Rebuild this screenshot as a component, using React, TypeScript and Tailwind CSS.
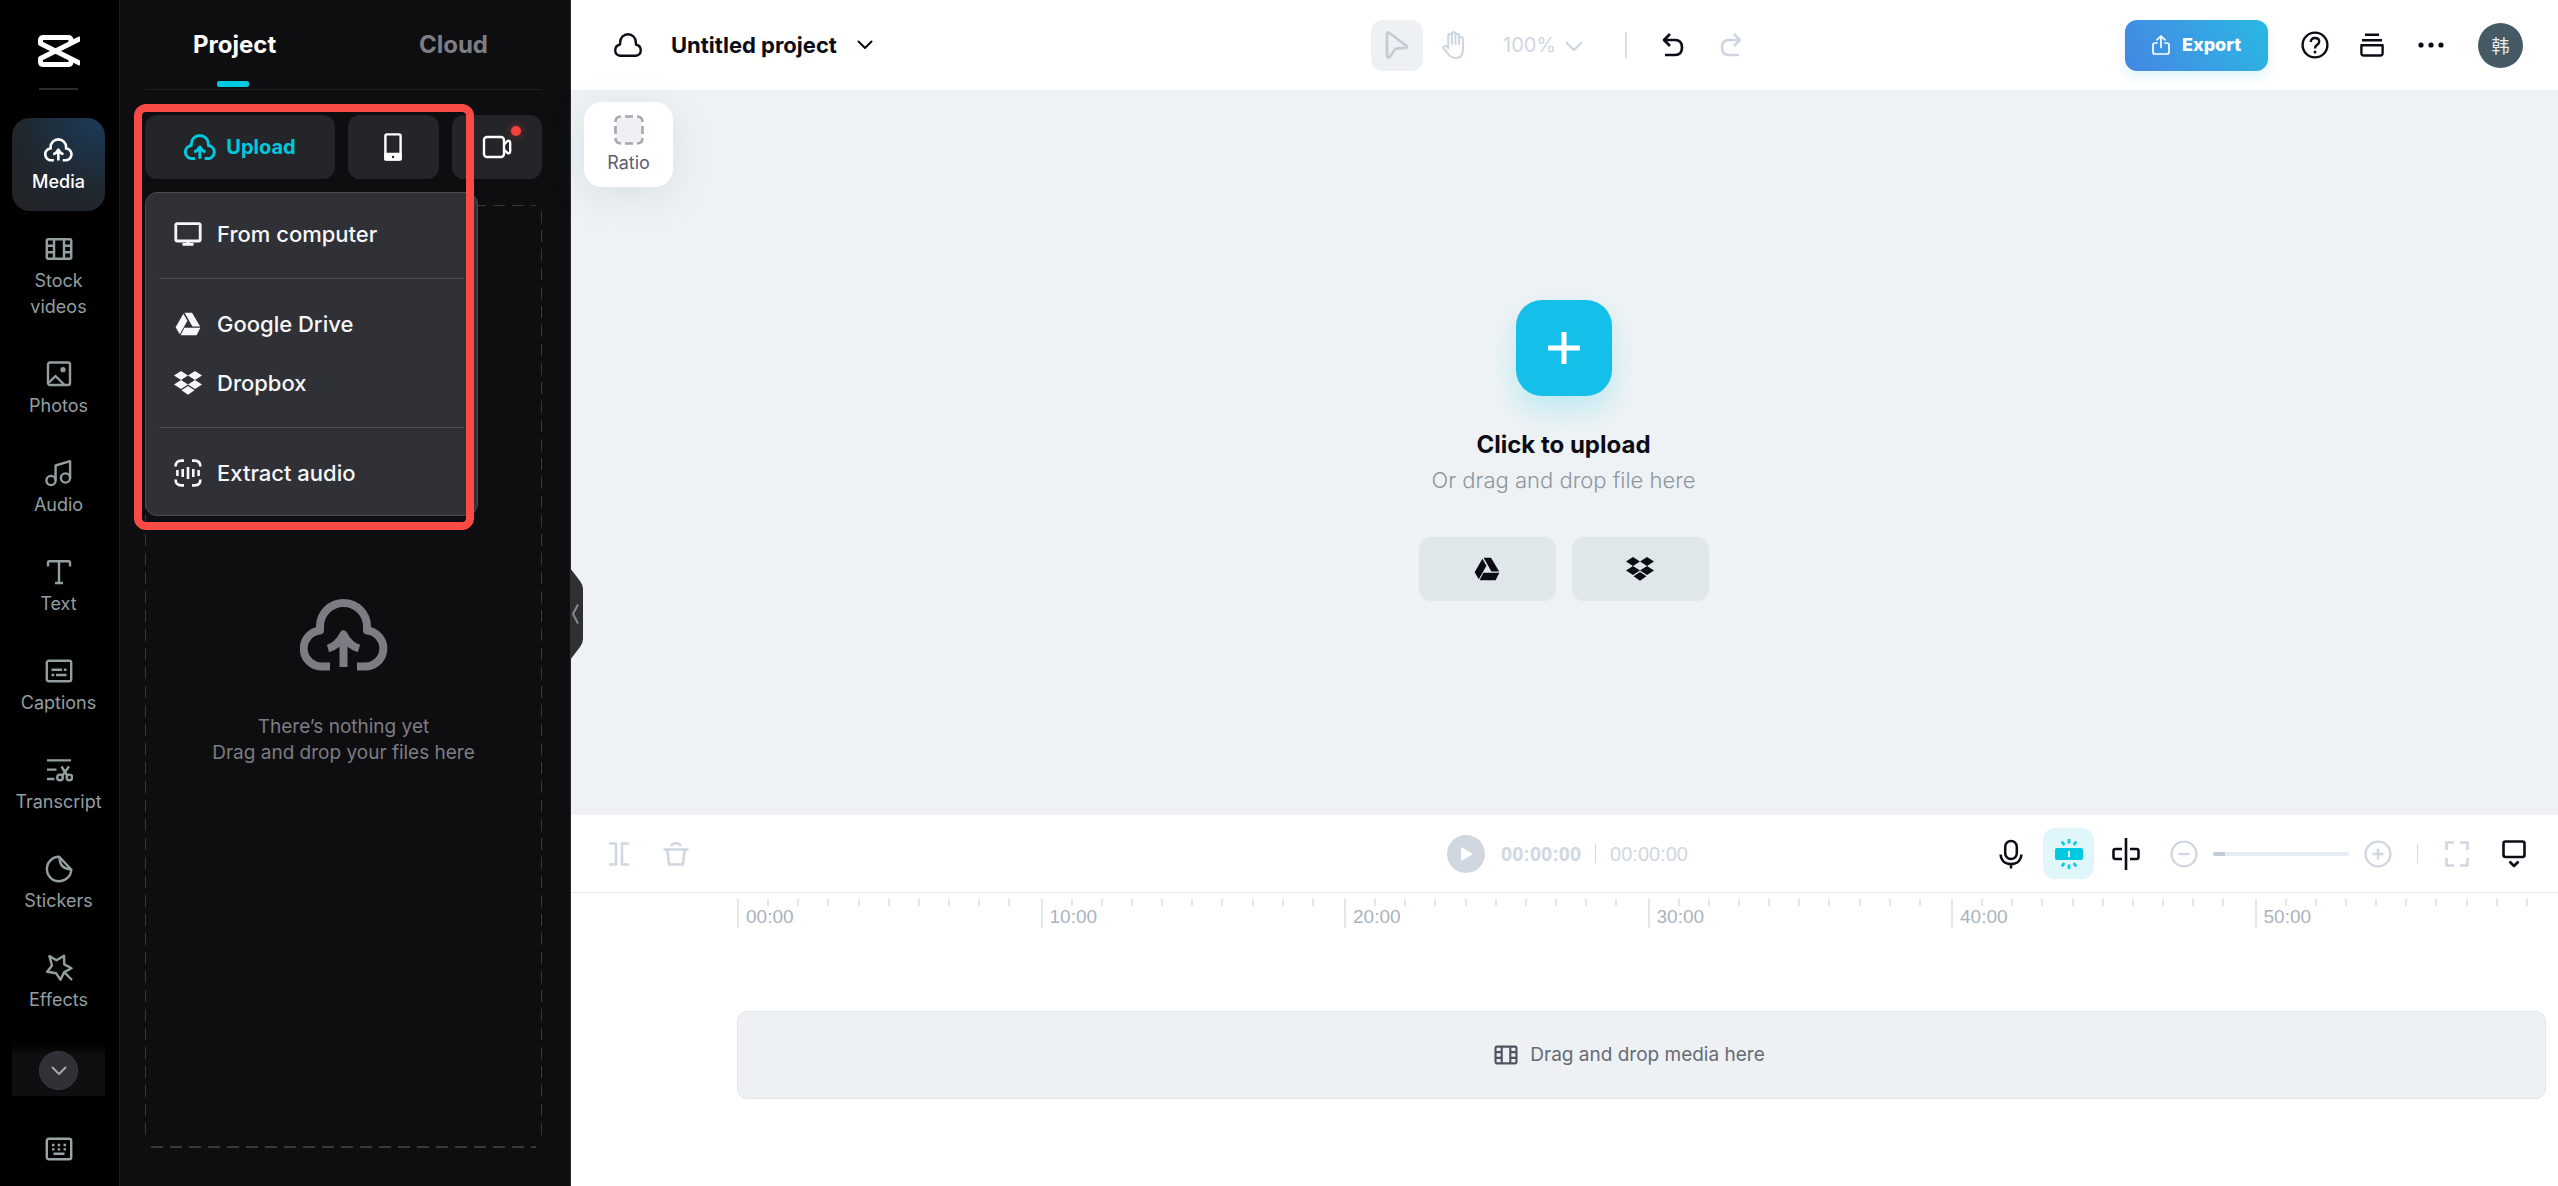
import type { ReactNode } from "react";

const stroke = { fill: "none", stroke: "currentColor", strokeLinecap: "round", strokeLinejoin: "round" } as const;
const flat = { fill: "none", stroke: "currentColor", strokeLinejoin: "round" } as const;

function CloudUploadIcon({ className }: { className: string }) {
  return (
    <svg viewBox="0 0 88 72" className={className} {...flat} strokeWidth="8">
      <path d="M30 67.5H23.5A18 18 0 0 1 20 31.5V27.5a23.5 23.5 0 0 1 47 0v4A18 18 0 0 1 63.5 67.5H57" />
      <path d="M28 49.5C35 47.5 40 42.5 43.5 35.5C47 42.5 52 47.5 59 49.5M43.5 40V68" />
    </svg>
  );
}

function DriveIcon({ className }: { className: string }) {
  return (
    <svg viewBox="0 0 26 24" className={className} fill="currentColor">
      <path d="M8.4 1.8 12.4 8.8 4.8 22.2.6 15.2zM9.6.8H17L25.2 14.6H17.4zM9.4 15.8H25.4L21.6 23.2H5.6z" />
    </svg>
  );
}

function DropboxIcon({ className }: { className: string }) {
  return (
    <svg viewBox="0 0 28 24" className={className} fill="currentColor">
      <path d="M7 0 14 4.5 7 9 0 4.5zM21 0 28 4.5 21 9 14 4.5zM7 9 14 13.5 7 18 0 13.5zM21 9 28 13.5 21 18 14 13.5zM14 15 20.5 19.3 14 23.8 7.5 19.3z" />
    </svg>
  );
}

function FilmIcon({ className }: { className: string }) {
  return (
    <svg viewBox="0 0 28 28" className={className} {...flat} strokeWidth="2.5">
      <rect x="1.8" y="4.2" width="24.4" height="19.6" rx="1.5" />
      <path d="M9 4v20M19 4v20M2 10.7h7M2 17.3h7M19 10.7h7M19 17.3h7" />
    </svg>
  );
}

function ChevronDown({ className }: { className: string }) {
  return (
    <svg viewBox="0 0 16 10" className={className} {...stroke} strokeWidth="2">
      <path d="M1.5 1.5 8 8l6.5-6.5" />
    </svg>
  );
}

function NavIcon({ children }: { children: ReactNode }) {
  return (
    <svg viewBox="0 0 28 28" className="size-7" {...flat} strokeWidth="2.4">
      {children}
    </svg>
  );
}

const navItems = [
  { label: "Stock videos", icon: <FilmIcon className="size-7" /> },
  {
    label: "Photos",
    icon: (
      <NavIcon>
        <rect x="3" y="2.5" width="22" height="22.5" rx="2" />
        <circle cx="18" cy="9.7" r="2.6" fill="currentColor" stroke="none" />
        <path d="M4 22.5 10.5 16l9 9" />
      </NavIcon>
    ),
  },
  {
    label: "Audio",
    icon: (
      <NavIcon>
        <circle cx="6" cy="21.5" r="4.6" />
        <circle cx="20.5" cy="19" r="4.6" />
        <path d="M10.6 21.5V6.5L25.1 2.2V19" />
      </NavIcon>
    ),
  },
  {
    label: "Text",
    icon: (
      <NavIcon>
        <path d="M3 8.5V4.7Q3 3.2 4.5 3.2H23.5Q25 3.2 25 4.7V8.5M14 3.2V25M10 25h8" />
      </NavIcon>
    ),
  },
  {
    label: "Captions",
    icon: (
      <NavIcon>
        <rect x="1.8" y="3.8" width="24.4" height="20.4" rx="2" />
        <path d="M6.5 12.7h10.5M18.8 12.7h2.7M6.5 18h2.7M11 18h10.5" />
      </NavIcon>
    ),
  },
  {
    label: "Transcript",
    icon: (
      <NavIcon>
        <path d="M2 4.4h24M2 13.6h9.5M2 23h7.5M16.5 10.5l6 9.5M24 10.5l-7 9.5" />
        <circle cx="15" cy="21.4" r="2.8" />
        <circle cx="24.4" cy="21.4" r="2.8" />
      </NavIcon>
    ),
  },
  {
    label: "Stickers",
    icon: (
      <NavIcon>
        <path d="M14 1.7A12.2 12.3 0 1 0 26.3 14.5L14 1.7zM14.5 2.5C14.5 10 18 14 26 14.5" />
      </NavIcon>
    ),
  },
  {
    label: "Effects",
    icon: (
      <NavIcon>
        <path d="M4.4 2.1 11.5 6.3 19 1.7 19.3 10.4 26.5 14.3 19.2 18.1 15.5 25.8 11.1 19.2 2.2 17.8 7 11.5zM19.2 18.1 27 26" />
      </NavIcon>
    ),
  },
];

function Sidebar() {
  return (
    <nav className="flex w-[120px] flex-none flex-col items-center border-r border-[#1c1c1e] bg-black pt-[35px] pr-0.5 pb-[23px]">
      <svg viewBox="0 0 42 32" className="h-8 w-[42px] text-white" {...flat} strokeWidth="5">
        <path d="M42.5 3.5 2.5 23.5V26.5Q2.5 29.5 5.5 29.5H30Q33 29.5 33 26.5V25" />
        <path d="M42.5 28.5 2.5 8.5V5.5Q2.5 2.5 5.5 2.5H30Q33 2.5 33 5.5V7" />
      </svg>
      <div className="mt-[21px] h-0.5 w-[39px] bg-[#2c2c2e]" />

      <div className="mt-7 flex w-[93px] flex-col gap-1.5 text-center text-lg/[26px] text-[#939ea1]">
        <button className="flex flex-col items-center rounded-[18px] bg-[radial-gradient(circle_at_90%_0%,#1b3a57,#20272e_60%,#222326)] pt-[18px] pb-4 font-medium text-white">
          <span className="flex size-7 items-center justify-center">
            <CloudUploadIcon className="w-[29px] flex-none" />
          </span>
          <span className="mt-[5px]">Media</span>
        </button>
        {navItems.map((item) => (
          <button key={item.label} className="flex flex-col items-center pt-[18px] pb-4">
            {item.icon}
            <span className="mt-[5px]">{item.label}</span>
          </button>
        ))}
      </div>

      <div className="flex h-[67px] w-[93px] flex-none items-end justify-center bg-linear-to-b from-black to-[#0f0f11] to-40% pb-1.5">
        <button
          aria-label="More tools"
          className="flex size-[39px] items-center justify-center rounded-full border border-[#3b3c41] bg-[#303136] text-[#a6a7ad]"
        >
          <ChevronDown className="w-4" />
        </button>
      </div>

      <button aria-label="Keyboard shortcuts" className="mt-auto text-[#9aa5a8]">
        <NavIcon>
          <rect x="1.8" y="3.8" width="24.4" height="20.4" rx="2" />
          <path d="M7 10h2.5M12.7 10h2.5M18.5 10h2.5M7 14.4h2.5M12.7 14.4h2.5M18.5 14.4h2.5M8.5 18.8h11" />
        </NavIcon>
      </button>
    </nav>
  );
}

function MenuItem({ icon, children }: { icon: ReactNode; children: ReactNode }) {
  return (
    <button role="menuitem" className="flex h-[59px] w-full items-center gap-[15px] pl-7 text-left">
      <span className="flex w-7 justify-center">{icon}</span>
      {children}
    </button>
  );
}

function UploadMenu() {
  return (
    <div
      role="menu"
      className="absolute top-[77px] left-0 z-10 w-[333px] rounded-xl border border-[#4a4b50] bg-[#303136] pt-[11px] pb-[13px] text-[22px]/7 font-medium text-[#f7f7fa]"
    >
      <MenuItem
        icon={
          <svg viewBox="0 0 28 24" className="w-7" {...flat} strokeWidth="2.8">
            <rect x="1.8" y="1.6" width="24.4" height="17.4" rx="1.5" />
            <path d="M14 19v3M8.5 22.4h11" />
          </svg>
        }
      >
        From computer
      </MenuItem>
      <hr className="mx-[13px] my-[15px] border-[#4d4e53]" />
      <MenuItem icon={<DriveIcon className="w-[26px]" />}>Google Drive</MenuItem>
      <MenuItem icon={<DropboxIcon className="w-7" />}>Dropbox</MenuItem>
      <hr className="mx-[13px] my-[15px] border-[#4d4e53]" />
      <MenuItem
        icon={
          <svg viewBox="0 0 28 28" className="w-7" {...flat} strokeWidth="2.6">
            <path d="M1.6 7.5Q1.6 1.6 7.5 1.6H10M18 1.6h2.5Q26.4 1.6 26.4 7.5M26.4 20.5Q26.4 26.4 20.5 26.4H18M10 26.4H7.5Q1.6 26.4 1.6 20.5" />
            <path d="M3.4 11v6M8.7 10v8M14 8v12M19.3 10v8M24.6 11v6" />
          </svg>
        }
      >
        Extract audio
      </MenuItem>
    </div>
  );
}

function MediaPanel() {
  return (
    <aside className="flex w-[451px] flex-none flex-col border-r border-[#2a2a2c] bg-[#0e0e10] pr-7 pb-[38px] pl-[25px]">
      <div role="tablist" className="flex h-[90px] flex-none justify-between border-b border-[#1f1f22] pr-[54px] pl-12 text-2xl font-bold">
        <button role="tab" aria-selected="true" className="relative text-white">
          Project
          <span className="absolute bottom-0.5 left-6 h-1.5 w-8 rounded-xs bg-[#00c9e0]" />
        </button>
        <button role="tab" aria-selected="false" className="text-[#7d7d86]">
          Cloud
        </button>
      </div>

      <div className="relative mt-[25px] flex h-16 flex-none gap-[13px]">
        <button className="flex w-[190px] items-center justify-center gap-2.5 rounded-xl bg-[#242529] text-xl font-bold text-[#00c9e0]">
          <CloudUploadIcon className="w-8" />
          Upload
        </button>
        <button aria-label="Upload from phone" className="flex flex-1 items-center justify-center rounded-xl bg-[#242529] text-white">
          <svg viewBox="0 0 18 28" className="h-7" {...flat} strokeWidth="2.4">
            <rect x="1.4" y="1.4" width="15.2" height="25.2" rx="1.5" />
            <path d="M1.4 21h15.2v5.4H1.4z" fill="currentColor" />
            <circle cx="9" cy="24" r="1.2" fill="#242529" stroke="none" />
          </svg>
        </button>
        <button aria-label="Record" className="relative flex flex-1 items-center justify-center rounded-xl bg-[#242529] text-white">
          <svg viewBox="0 0 30 24" className="w-[30px]" {...flat} strokeWidth="2.4">
            <rect x="2" y="2" width="20" height="20" rx="3" />
            <path d="M22 9.5 25.5 6q2.7-1 2.7 2v8q0 3-2.7 2L22 14.5" />
          </svg>
          <span className="absolute top-[11px] right-[21px] size-2.5 rounded-full bg-[#fa3e3e] shadow-[0_0_8px_#fa3e3e80]" />
        </button>
        <UploadMenu />
        <div className="pointer-events-none absolute -top-[11px] -left-[11px] z-20 h-[426px] w-[340px] rounded-xl border-8 border-[#f94a45]" />
      </div>

      <div className="mt-[26px] flex flex-1 flex-col items-center justify-center bg-[repeating-linear-gradient(90deg,#38383b_0_12px,transparent_12px_19px),repeating-linear-gradient(90deg,#38383b_0_12px,transparent_12px_19px),repeating-linear-gradient(#38383b_0_12px,transparent_12px_19px),repeating-linear-gradient(#38383b_0_12px,transparent_12px_19px)] [background-position:6px_0,6px_100%,0_6px,100%_6px] [background-size:385px_1px,385px_2px,1px_calc(100%_-_12px),1px_calc(100%_-_12px)] bg-no-repeat pt-3 text-center text-[19px]/[26px] text-[#7c7c84]">
        <CloudUploadIcon className="w-[88px]" />
        <p className="mt-[43px]">
          There’s nothing yet
          <br />
          Drag and drop your files here
        </p>
      </div>
    </aside>
  );
}

function TopBar() {
  return (
    <header className="flex h-[90px] flex-none items-center bg-white pr-[35px] pl-[42px] text-[#0c0c16]">
      <div className="flex flex-1 items-center">
        <svg viewBox="0 0 30 24" className="w-[30px]" {...flat} strokeWidth="2.4">
          <path d="M6.8 22.8H23.2A5.6 5.6 0 0 0 23.2 11.8Q22.8 11.7 22.8 10V9A7.8 7.8 0 0 0 7.2 9V10Q7.2 11.7 6.8 11.8A5.6 5.6 0 0 0 6.8 22.8z" />
        </svg>
        <button className="ml-7 flex items-center gap-5 text-[22px] font-bold">
          Untitled project
          <ChevronDown className="w-4" />
        </button>
      </div>

      <div className="flex items-center pr-2 text-[#cfd6df]">
        <button aria-label="Select" className="flex h-[51px] w-[52px] items-center justify-center rounded-xl bg-[#eef1f4] text-[#c3ccd5]">
          <svg viewBox="0 0 24 28" className="h-7" {...stroke} strokeWidth="2.8">
            <path d="M2 3.5Q2 .5 4.5 2L21 14.5Q23 16.5 20.5 16.8L12 17.5Q10.5 17.7 9.5 19L5.2 25.5Q2 27.8 2 24.5z" />
          </svg>
        </button>
        <button aria-label="Hand" className="flex w-[62px] justify-center">
          <svg viewBox="0 0 24 28" className="h-7" {...stroke} strokeWidth="2.1">
            <path d="M6.3 14.5V4.6a1.8 1.8 0 0 1 3.6 0V13M9.9 12.5V2.9a1.8 1.8 0 0 1 3.6 0V13M13.5 12.5V4.6a1.8 1.8 0 0 1 3.6 0V13M17.1 12.5V7.9a1.9 1.9 0 0 1 3.9 0V18.5C21 24 18 27 13.5 27C9.5 27 7.5 25 5 21.5L1.5 17.5C.5 15.5 3 14 4.5 15.5L6.3 17.2V14" />
          </svg>
        </button>
        <button className="ml-[18px] flex items-center gap-[9px] text-xl">
          100%
          <ChevronDown className="mt-1 w-[18px]" />
        </button>
        <div className="ml-[42px] h-[26px] w-0.5 bg-[#d9dfe6]" />
        <button aria-label="Undo" className="ml-5 flex w-[52px] justify-center text-[#0c0c16]">
          <svg viewBox="0 0 22 24" className="h-6" {...flat} strokeWidth="2.6">
            <path d="M8 1 2 7l6 6M2.5 7H13q7 0 7 7.5T13 22H3" />
          </svg>
        </button>
        <button aria-label="Redo" className="ml-1.5 flex w-[52px] justify-center">
          <svg viewBox="0 0 22 24" className="h-6" {...flat} strokeWidth="2.6">
            <path d="M14 1l6 6-6 6M19.5 7H9q-7 0-7 7.5T9 22H19" />
          </svg>
        </button>
      </div>

      <div className="flex flex-1 items-center justify-end">
        <button className="flex h-[51px] w-[143px] items-center justify-center gap-3 rounded-xl bg-linear-60 from-[#4485e4] to-[#26b8e2] text-lg font-extrabold text-white shadow-[0_6px_12px_#26b8e226]">
          <svg viewBox="0 0 18 20" className="w-[18px]" {...stroke} strokeWidth="1.7">
            <path d="M5 8H3Q1 8 1 10v7q0 2 2 2h12q2 0 2-2v-7q0-2-2-2h-2M9 12.5V1.2M5 4.8 9 1l4 3.8" />
          </svg>
          Export
        </button>
        <button aria-label="Help" className="ml-[33px]">
          <svg viewBox="0 0 28 28" className="size-7" {...flat} strokeWidth="2.4">
            <circle cx="14" cy="14" r="12.4" />
            <path d="M9.8 11q0-4 4.2-4t4.2 3.6q0 2.2-2.1 3.3T14 17.5" />
            <circle cx="14" cy="21" r="1.5" fill="currentColor" stroke="none" />
          </svg>
        </button>
        <button aria-label="Tasks" className="ml-[31px]">
          <svg viewBox="0 0 24 24" className="size-6" {...flat} strokeWidth="2.4">
            <path d="M5 1.7h14M2 7.3h20M1.4 12.3h21.2v8q0 2.2-2.2 2.2H3.6q-2.2 0-2.2-2.2z" />
          </svg>
        </button>
        <button aria-label="More" className="ml-[34px]">
          <svg viewBox="0 0 26 26" className="size-[26px]" fill="currentColor">
            <circle cx="3" cy="13" r="2.6" />
            <circle cx="13" cy="13" r="2.6" />
            <circle cx="23" cy="13" r="2.6" />
          </svg>
        </button>
        <button className="ml-[34px] flex size-[45px] items-center justify-center rounded-full bg-[#455a64] font-['Noto_Sans_CJK_SC',sans-serif] text-lg/5 text-[#e8ecee]">
          韩
        </button>
      </div>
    </header>
  );
}

function Canvas() {
  return (
    <section className="relative flex flex-1 flex-col items-center justify-center bg-[#eef2f5] pr-0.5 pb-1">
      <button className="absolute top-3 left-[13px] flex h-[85px] w-[89px] flex-col items-center justify-center gap-1.5 rounded-[18px] bg-white text-lg/6 text-[#5c6070] shadow-[0_8px_40px_#55707022]">
        <svg viewBox="0 0 30 30" className="size-[30px]" {...flat} strokeWidth="2.6">
          <rect x="2" y="2" width="26" height="26" rx="4" fill="#eff0f3" stroke="none" />
          <path d="M1.5 7Q1.5 1.5 7 1.5M11 1.5h8M23 1.5Q28.5 1.5 28.5 7M28.5 11v8M28.5 23Q28.5 28.5 23 28.5M19 28.5h-8M7 28.5Q1.5 28.5 1.5 23M1.5 19v-8" stroke="#a4a8b0" />
        </svg>
        Ratio
      </button>

      <button aria-label="Upload" className="flex size-24 items-center justify-center rounded-[26px] bg-[#14c0ea] text-white shadow-[0_14px_28px_#14d0ea38]">
        <svg viewBox="0 0 32 32" className="size-8" {...flat} strokeWidth="5">
          <path d="M16 0v32M0 16h32" />
        </svg>
      </button>
      <h1 className="mt-[34px] text-2xl/[30px] font-bold text-[#0c0c16]">Click to upload</h1>
      <p className="mt-[5px] text-[22px]/[30px] font-light text-[#8d979f]">Or drag and drop file here</p>
      <div className="mt-[42px] flex gap-4 text-[#0c0c16]">
        <button aria-label="Google Drive" className="flex h-16 w-[137px] items-center justify-center rounded-xl bg-[#e0e7ea]">
          <DriveIcon className="w-[26px]" />
        </button>
        <button aria-label="Dropbox" className="flex h-16 w-[137px] items-center justify-center rounded-xl bg-[#e0e7ea]">
          <DropboxIcon className="w-7" />
        </button>
      </div>

      <button aria-label="Collapse panel" className="absolute top-[478px] -left-px text-[#303032]">
        <svg viewBox="0 0 13 92" className="h-[92px] w-[13px]" fill="currentColor">
          <path d="M0 0 10 13Q13 17 13 21V71Q13 75 10 79L0 92z" />
          <path d="M8 36.5 3 46l5 9.5" fill="none" stroke="#85888c" strokeWidth="2" />
        </svg>
      </button>
    </section>
  );
}

function ZoomIcon({ d }: { d: string }) {
  return (
    <svg viewBox="0 0 28 30" className="w-7" {...flat} strokeWidth="2.4">
      <circle cx="14" cy="15" r="12.4" />
      <path d={d} />
    </svg>
  );
}

function TimelineToolbar() {
  return (
    <div className="flex h-[78px] items-center border-b border-[#e3e6ea] pr-8 pl-[38px] text-[#d0d7e0]">
      <div className="flex flex-1 items-center gap-[34px]">
        <button aria-label="Split">
          <svg viewBox="0 0 20 24" className="w-5" {...flat} strokeWidth="2.6">
            <path d="M0 1.5h7v21H0M20 1.5h-7v21h7" />
          </svg>
        </button>
        <button aria-label="Delete">
          <svg viewBox="0 0 26 24" className="w-[26px]" {...flat} strokeWidth="2.6">
            <path d="M.5 7.5h25M4.5 8 6 22.5h14L21.5 8M8 4Q9 1.3 13 1.3T18 4" />
          </svg>
        </button>
      </div>

      <div className="flex items-center font-['Liberation_Sans',sans-serif] text-xl">
        <button aria-label="Play" className="flex size-[38px] items-center justify-center rounded-full bg-[#d0d7e0]">
          <svg viewBox="0 0 12 14" className="ml-0.5 h-3.5" fill="#fff">
            <path d="M0 0 12 7 0 14z" />
          </svg>
        </button>
        <span className="ml-4 font-bold">00:00:00</span>
        <span className="mx-3.5 h-[19px] w-px bg-[#d0d7e0]" />
        <span>00:00:00</span>
      </div>

      <div className="flex flex-1 items-center justify-end">
        <button aria-label="Record voice" className="text-[#0c0c16]">
          <svg viewBox="0 0 24 30" className="w-6" {...flat} strokeWidth="2.5">
            <rect x="6.2" y="2" width="11.6" height="18" rx="5.8" />
            <path d="M1.6 15.5C2 21.5 6 25 12 25S22 21.5 22.4 15.5M12 25v4.5" />
          </svg>
        </button>
        <button aria-label="Snapping" className="ml-5 flex size-[51px] items-center justify-center rounded-xl bg-[#dff7fb] text-[#00c9e0]">
          <svg viewBox="0 0 28 32" className="w-7" {...flat} strokeWidth="2.6">
            <rect x="0" y="10" width="28" height="12" rx="2" fill="currentColor" stroke="none" />
            <path d="M14 13v6" stroke="#dff7fb" strokeWidth="2" />
            <path d="M14 1v4.5M6.8 3.5 9.3 7M21.2 3.5 18.7 7M14 26.5V31M6.8 28.5 9.3 25M21.2 28.5 18.7 25" />
          </svg>
        </button>
        <button aria-label="Linkage" className="ml-[18px] text-[#0c0c16]">
          <svg viewBox="0 0 28 32" className="w-7" {...flat} strokeWidth="2.6">
            <path d="M14 0v32M10 11H3.5Q1.5 11 1.5 13v6Q1.5 21 3.5 21H10M18 11h6.5Q26.5 11 26.5 13v6Q26.5 21 24.5 21H18" />
          </svg>
        </button>
        <button aria-label="Zoom out" className="ml-[30px]">
          <ZoomIcon d="M8.5 15h11" />
        </button>
        <input
          type="range"
          aria-label="Timeline zoom"
          defaultValue={0}
          className="mx-[15px] h-1 w-[136px] appearance-none rounded-full bg-linear-to-r from-[#c3ccd5] from-9% to-[#e8edf1] to-9% [&::-webkit-slider-thumb]:size-0 [&::-webkit-slider-thumb]:appearance-none"
        />
        <button aria-label="Zoom in">
          <ZoomIcon d="M8.5 15h11M14 9.5v11" />
        </button>
        <div className="ml-[25px] h-[19px] w-px bg-[#d0d7e0]" />
        <button aria-label="Full screen" className="ml-[27px]">
          <svg viewBox="0 0 24 26" className="w-6" {...flat} strokeWidth="2.6">
            <path d="M1.5 9V1.5H9M15 1.5h7.5V9M22.5 17v7.5H15M9 24.5H1.5V17" />
          </svg>
        </button>
        <button aria-label="Preview" className="ml-[33px] text-[#0c0c16]">
          <svg viewBox="0 0 24 28" className="w-6" {...flat} strokeWidth="2.6">
            <rect x="1.5" y="1.5" width="21" height="15.5" rx="2" />
            <path d="M7.5 21.5 12 26l4.5-4.5" />
          </svg>
        </button>
      </div>
    </div>
  );
}

function Timeline() {
  return (
    <section className="bg-white">
      <TimelineToolbar />
      <div className="mt-1.5 ml-[166px] grid grid-cols-6 font-['Liberation_Sans',sans-serif] text-[19px]/[22px] text-[#a9b3c0]">
        {["00:00", "10:00", "20:00", "30:00", "40:00", "50:00"].map((time) => (
          <div key={time} className="border-l-2 border-[#e3e7ec]">
            <div className="grid h-[7px] grid-cols-10">
              {Array.from({ length: 10 }, (_, i) => (
                <div key={i} className="border-r-2 border-[#e3e7ec] last:border-0" />
              ))}
            </div>
            <div className="pl-[7px]">{time}</div>
          </div>
        ))}
      </div>
      <div className="mt-[83px] mr-3 mb-[87px] ml-[166px] flex h-[88px] items-center justify-center gap-3 rounded-[10px] border border-[#e2e6ea] bg-[#eef1f4] pr-6 text-[19px] text-[#666b75]">
        <FilmIcon className="size-6 text-[#4e545f]" />
        Drag and drop media here
      </div>
    </section>
  );
}

export default function App() {
  return (
    <div className="flex min-h-screen font-['Inter',sans-serif]">
      <Sidebar />
      <MediaPanel />
      <main className="flex min-w-0 flex-1 flex-col">
        <TopBar />
        <Canvas />
        <Timeline />
      </main>
    </div>
  );
}
